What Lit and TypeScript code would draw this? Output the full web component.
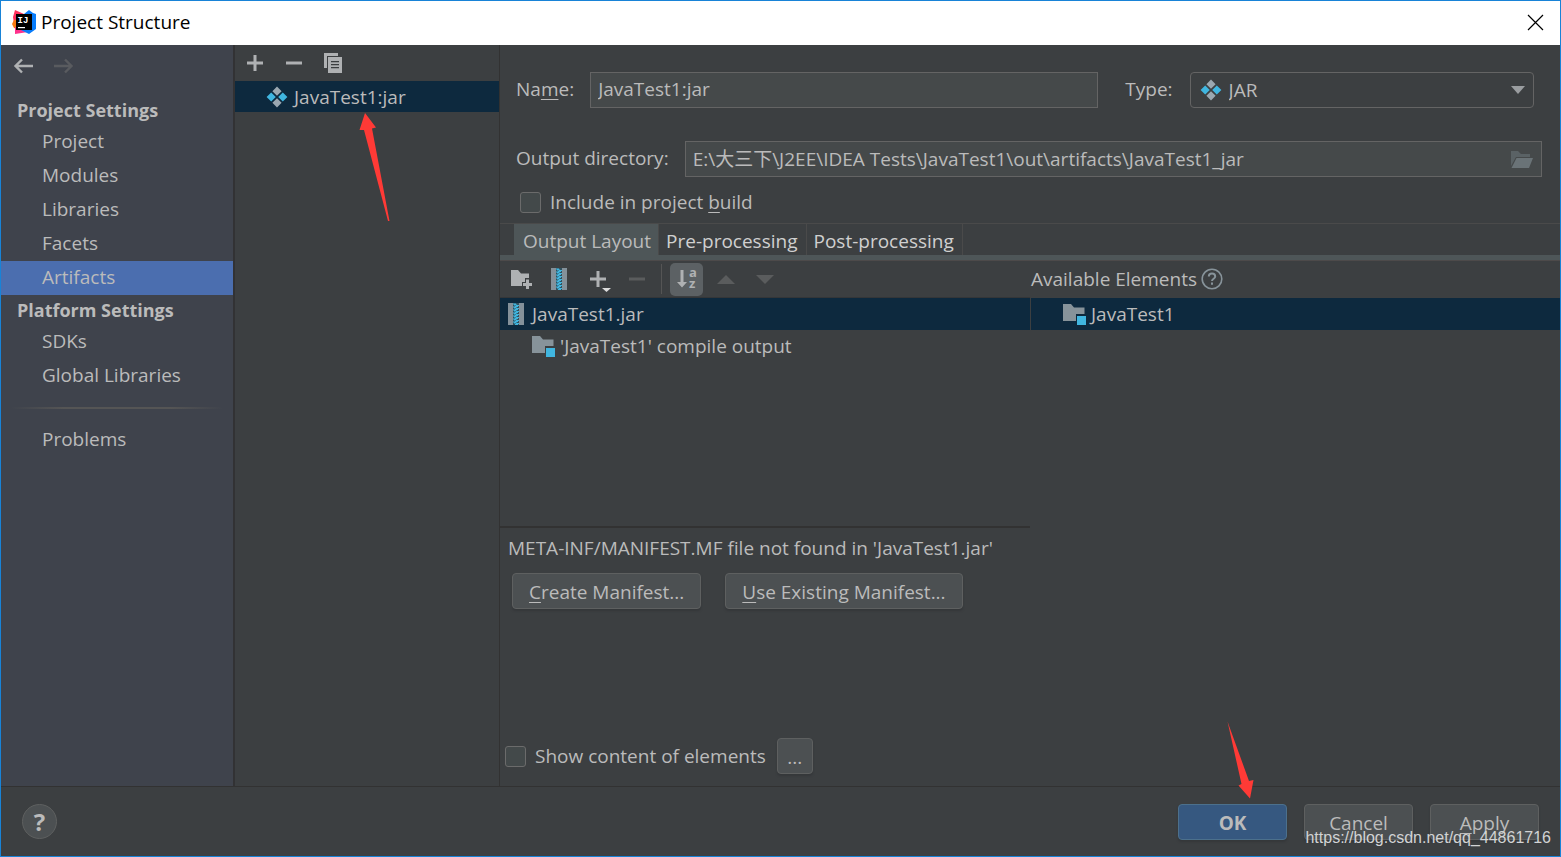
import { LitElement, html, css, svg } from "lit";
import { customElement, state } from "lit/decorators.js";
import { classMap } from "lit/directives/class-map.js";

const artifactIcon = html`<svg class="icon" width="22" height="22" viewBox="0 0 22 22" aria-hidden="true">
  <path fill="#9aa7b0" d="M11 .6l4.6 4.6L11 9.8 6.4 5.2zM11 12.2l4.6 4.6-4.6 4.6-4.6-4.6z" />
  <path fill="#40b6e0" d="M5.2 6.4L9.8 11l-4.6 4.6L.6 11zM16.8 6.4l4.6 4.6-4.6 4.6-4.6-4.6z" />
</svg>`;

const zipTeeth = Array.from(
  { length: 7 },
  (_, i) => svg`<path d="M5 ${i * 3 + 0.5}h3v1h1v1h-3v-1h-1zM8 ${i * 3 + 2}h3v1h-1v1h-3v-1h1z" />`,
);
const jarIcon = html`<svg class="icon" width="16" height="22" viewBox="0 0 16 22" aria-hidden="true">
  <path fill="#84919a" d="M0 0h5v22H0zM11 0h5v22h-5z" />
  <path fill="#31515f" d="M5 0h6v22H5z" />
  <g fill="#40b6e0">${zipTeeth}</g>
</svg>`;

const moduleIcon = html`<svg class="icon" width="24" height="22" viewBox="0 0 24 22" aria-hidden="true">
  <path fill="#87939a" d="M0 1h8l3 3.500h10.500V11H13v7H0z" />
  <path fill="#40b6e0" d="M14 13h9v9h-9z" />
</svg>`;

const logoIcon = html`<svg class="icon" width="24" height="24" viewBox="0 0 24 24" aria-hidden="true">
  <path fill="#fe315d" d="M3 0l9 4-4 16-6-6-1-7z" />
  <path fill="#f97a12" d="M0 14l2-4 3 0v9l-3-1z" />
  <path fill="#ff318c" d="M3 17l9 3 4 2-13 2z" />
  <path fill="#087cfa" d="M12 4l5-4 4 3 3 1v15l-7 5-8-4z" />
  <path fill="#000" d="M4 4h16v16H4z" />
  <path fill="#fff" d="M6 17h7v1.200H6z" />
  <text class="logo-text" x="5.500" y="13">IJ</text>
</svg>`;

@customElement("app-root")
export class AppRoot extends LitElement {
  @state() private page = "Artifacts";

  static styles = css`
    :host {
      display: flex;
      flex-direction: column;
      box-sizing: border-box;
      min-height: 100vh;
      position: relative;
      border: 1px solid #1883d7;
      background: #3c3f41;
      color: #bbbbbb;
      font: 19px/26px "Open Sans", "Noto Sans CJK SC", sans-serif;
    }
    * { box-sizing: border-box; }
    button, input, select { font: inherit; color: inherit; margin: 0; }
    ul { list-style: none; margin: 0; padding: 0; }
    u { text-underline-offset: 3px; text-decoration-thickness: 1px; }
    .icon { display: block; flex: none; }

    .titlebar {
      display: flex;
      align-items: center;
      gap: 5px;
      height: 44px;
      padding: 0 16px 2px 11px;
      background: #fff;
      color: #000;
    }
    .title { flex: 1; margin: 0; font-size: 19px; font-weight: 400; }
    .logo-text { font: bold 9px "Liberation Mono", monospace; fill: #fff; }

    .plain {
      display: flex;
      align-items: center;
      justify-content: center;
      padding: 0;
      border: 0;
      background: none;
    }

    .body { flex: 1; display: flex; }

    .sidebar { width: 234px; background: #3f434c; border-right: 2px solid #323234; }
    .history { display: flex; align-items: center; gap: 21px; height: 50px; padding: 0 12px; }
    .history .plain { height: 42px; align-self: flex-start; }
    .heading { margin: 0; padding-left: 16px; font-size: 18px; line-height: 30px; font-weight: 700; }
    .nav-item {
      display: block;
      height: 34px;
      padding-left: 41px;
      line-height: 32px;
      color: inherit;
      text-decoration: none;
    }
    .nav-item.on { background: #4b6eaf; }
    .rule {
      height: 2px;
      margin: 14px 10px;
      border: 0;
      background: linear-gradient(90deg, transparent, #555 25%, #555 75%, transparent);
    }

    .list { width: 265px; border-right: 1px solid #323232; }
    .list-tools { display: flex; align-items: center; gap: 20px; height: 36px; padding: 0 10px; }
    .list-item {
      position: relative;
      display: flex;
      align-items: center;
      gap: 6px;
      height: 31px;
      padding-left: 31px;
      background: #0d293e;
    }
    .arrow { position: absolute; pointer-events: none; z-index: 2; }
    .arrow-item { left: 124px; top: 31px; }
    .arrow-ok { left: 48px; bottom: 40px; }

    .details { flex: 1; display: flex; flex-direction: column; min-width: 0; }
    .form { display: flex; flex-direction: column; padding: 27px 18px 0 16px; }
    .row { display: flex; align-items: center; height: 36px; line-height: 24px; }
    .row > label { padding-bottom: 2px; }
    .row-name { padding-right: 8px; margin-bottom: 33px; }
    .row-check { height: 46px; padding: 6px 4px 0; }
    .name-label { margin-right: 16px; }
    .type-label { margin: 0 17px 0 27px; }
    .out-label { margin-right: 16px; }
    .field {
      width: 100%;
      height: 36px;
      padding: 0 7px 2px;
      border: 1px solid #646464;
      border-radius: 0;
      background: #45494a;
      outline: none;
    }
    .name-box { flex: 509; }
    .type-box { flex: 345; position: relative; }
    .out-box { flex: 1; position: relative; }
    .select {
      display: block;
      width: 100%;
      height: 36px;
      padding: 0 38px;
      appearance: none;
      border: 1px solid #646464;
      border-radius: 4px;
      background: #3c3f41;
    }
    .in-left, .in-right { position: absolute; top: 0; height: 36px; display: flex; align-items: center; pointer-events: none; }
    .in-left { left: 10px; }
    .in-right { right: 9px; }
    .check { display: flex; align-items: center; gap: 9px; }
    .box {
      appearance: none;
      width: 21px;
      height: 21px;
      border: 1px solid #6b6b6b;
      border-radius: 3px;
      background: #43494a;
    }

    .tabs {
      display: flex;
      height: 37px;
      padding-left: 14px;
      border-top: 1px solid #4a4a4a;
      border-bottom: 5px solid #4e5658;
    }
    .tab {
      padding: 2px 8px 0 7px;
      border: 0;
      border-right: 1px solid #4a4a4a;
      background: none;
      white-space: nowrap;
      color: #d0d0d0;
      line-height: 28px;
    }
    .tab.on { padding: 2px 7px 0 9px; background: #4e5658; color: #bbbbbb; }

    .panes {
      flex: 1;
      display: grid;
      grid-template-columns: 1fr 1fr;
      grid-template-rows: auto 1fr;
      border-top: 1px solid #4d4a4a;
    }
    .pane { display: flex; flex-direction: column; min-width: 0; }
    .tools { display: flex; align-items: center; height: 37px; padding-left: 10px; border-bottom: 1px solid #343638; }
    .tools-right { gap: 4px; padding: 0 0 1px 1px; border-bottom-color: transparent; }
    .tool { width: 39px; height: 36px; justify-content: flex-start; }
    .archive { padding-left: 2px; }
    .toggle { width: 33px; height: 33px; margin: 0 14px 0 8px; border-radius: 5px; background: #5c6164; }
    .bar { width: 1px; height: 30px; background: #555; margin-left: -5px; }
    .tool-text { font: bold 13px "Open Sans", sans-serif; fill: #afb1b3; }
    .tree { height: 230px; border-bottom: 2px solid #323232; }
    .node { display: flex; align-items: center; gap: 8px; height: 32px; padding-left: 8px; }
    .node.on { background: #0d293e; }
    .node.child { gap: 4px; padding-left: 32px; }
    .node.right { gap: 4px; padding-left: 32px; border-left: 1px solid #3c3f41; }
    .notice { margin: 7px 8px 12px; }
    .actions { display: flex; gap: 24px; padding-left: 12px; }
    .btn {
      height: 36px;
      padding: 2px 16px 0;
      border: 1px solid #5e6060;
      border-radius: 4px;
      background: #4c5052;
      box-shadow: 0 2px 2px #35383a;
      line-height: 32px;
      white-space: nowrap;
    }
    .pane-foot { display: flex; align-items: center; gap: 11px; margin-top: auto; padding: 0 0 12px 5px; }
    .more { width: 36px; padding: 2px 0 0; }

    .footer {
      position: relative;
      display: flex;
      align-items: center;
      gap: 17px;
      height: 70px;
      padding: 0 21px;
      border-top: 1px solid #323232;
    }
    .help {
      width: 35px;
      height: 35px;
      margin-right: auto;
      border: 1px solid #5e6060;
      border-radius: 50%;
      background: #4c5052;
      font-size: 24px;
      font-weight: 700;
    }
    .dialog-btn { width: 109px; padding: 2px 0 0; }
    .ok { position: relative; font-weight: 700; background: #365880; border-color: #4c708c; }
    .watermark {
      position: absolute;
      right: 9px;
      bottom: 9px;
      font: 16px/18px "Liberation Sans", Arial, sans-serif;
      color: #d2d3d4;
    }
  `;

  private navItem(name: string) {
    return html`<li><a href="#" class=${classMap({ "nav-item": true, on: this.page === name })}
      @click=${(e: Event) => { e.preventDefault(); this.page = name; }}>${name}</a></li>`;
  }

  render() {
    return html`
      <header class="titlebar">
        ${logoIcon}
        <h1 class="title">Project Structure</h1>
        <button class="plain" aria-label="Close">
          <svg width="17" height="17" viewBox="0 0 17 17" stroke="#000" stroke-width="1.200"><path d="M1 1l15 15M16 1L1 16" /></svg>
        </button>
      </header>
      <div class="body">
        <nav class="sidebar">
          <div class="history">
            <button class="plain" aria-label="Back">
              <svg width="20" height="16" viewBox="0 0 20 16" fill="none" stroke="#afb1b3" stroke-width="2.400"><path d="M20 8H2.500M9 1.500L2.500 8 9 14.500" /></svg>
            </button>
            <button class="plain" aria-label="Forward" disabled>
              <svg width="20" height="16" viewBox="0 0 20 16" fill="none" stroke="#595b5f" stroke-width="2.400"><path d="M0 8h17.500M11 1.500L17.500 8 11 14.500" /></svg>
            </button>
          </div>
          <h2 class="heading">Project Settings</h2>
          <ul>${["Project", "Modules", "Libraries", "Facets", "Artifacts"].map((n) => this.navItem(n))}</ul>
          <h2 class="heading">Platform Settings</h2>
          <ul>${["SDKs", "Global Libraries"].map((n) => this.navItem(n))}</ul>
          <hr class="rule" />
          <ul>${this.navItem("Problems")}</ul>
        </nav>

        <section class="list">
          <div class="list-tools">
            <button class="plain" aria-label="Add"><svg width="20" height="20" viewBox="0 0 20 20"><path fill="#afb1b3" d="M8.500 2h3v6.500H18v3h-6.500V18h-3v-6.500H2v-3h6.500z" /></svg></button>
            <button class="plain" aria-label="Remove"><svg width="18" height="20" viewBox="0 0 18 20"><path fill="#afb1b3" d="M1 8.500h16v3H1z" /></svg></button>
            <button class="plain" aria-label="Copy"><svg width="20" height="20" viewBox="0 0 20 20"><path fill="#afb1b3" d="M1 0h14v3H4v12H1z" /><path fill="#afb1b3" fill-rule="evenodd" d="M5 4h14v16H5zM8 8v1.300h8V8zM8 11v1.300h8V11zM8 14v1.300h8V14z" /></svg></button>
          </div>
          <div class="list-item">
            ${artifactIcon}<span>JavaTest1:jar</span>
            <svg class="arrow arrow-item" width="32" height="112" viewBox="0 0 32 112" aria-hidden="true"><path fill="#ff3a36" d="M6 1L17 15.500l-4 1L30.500 109 29 109 5 18 .5 18z" /></svg>
          </div>
        </section>

        <main class="details">
          <div class="form">
            <div class="row row-name">
              <label class="name-label" for="name">Na<u>m</u>e:</label>
              <div class="name-box"><input class="field" id="name" value="JavaTest1:jar" /></div>
              <label class="type-label" for="type">Type:</label>
              <div class="type-box">
                <select class="select" id="type"><option>JAR</option></select>
                <span class="in-left">${artifactIcon}</span>
                <span class="in-right"><svg width="14" height="8" viewBox="0 0 14 8"><path fill="#9a9da0" d="M0 0h14L7 8z" /></svg></span>
              </div>
            </div>
            <div class="row">
              <label class="out-label" for="out">Output directory:</label>
              <div class="out-box">
                <input class="field" id="out" value="E:\\大三下\\J2EE\\IDEA Tests\\JavaTest1\\out\\artifacts\\JavaTest1_jar" />
                <span class="in-right"><svg width="22" height="17" viewBox="0 0 22 17"><path fill="#5a6265" d="M0 0h7l3 3h9v3H5L0 15z" /><path fill="#6a7377" d="M5.500 7H22l-4 10H.5z" /></svg></span>
              </div>
            </div>
            <div class="row row-check">
              <label class="check"><input class="box" type="checkbox" /><span>Include in project <u>b</u>uild</span></label>
            </div>
          </div>
          <div class="tabs" role="tablist">
            <button class="tab on" role="tab" aria-selected="true">Output Layout</button>
            <button class="tab" role="tab" aria-selected="false">Pre-processing</button>
            <button class="tab" role="tab" aria-selected="false">Post-processing</button>
          </div>
          <div class="panes">
            <div class="tools">
              <button class="plain tool" aria-label="Create directory"><svg width="22" height="20" viewBox="0 0 22 20"><path fill="#afb1b3" d="M1 1h7l3 3.500h8V9h-4v4h-3v4H1z" /><path fill="#afb1b3" d="M16 10.500h3V14h3v3h-3v3h-3v-3h-3v-3h3z" /></svg></button>
              <button class="plain tool archive" aria-label="Create archive">${jarIcon}</button>
              <button class="plain tool" aria-label="Add copy of"><svg width="24" height="26" viewBox="0 0 24 26"><path fill="#afb1b3" d="M8.500 5h3v6.500H18v3h-6.500V21h-3v-6.500H2v-3h6.500z" /><path fill="#dcdcdc" d="M14 22h9l-4.500 4z" /></svg></button>
              <button class="plain tool" aria-label="Remove" disabled><svg width="20" height="20" viewBox="0 0 20 20"><path fill="#5a5c5d" d="M2 8.500h16v3H2z" /></svg></button>
              <span class="bar"></span>
              <button class="plain toggle" aria-label="Sort by name and type" aria-pressed="true">
                <svg width="22" height="32" viewBox="0 0 22 32"><path fill="#afb1b3" d="M4.500 7h3v12H11l-5 5.500L1 19h3.500z" /><text class="tool-text" x="13" y="14">a</text><text class="tool-text" x="13" y="25">z</text></svg>
              </button>
              <button class="plain tool" aria-label="Move up" disabled><svg width="18" height="9" viewBox="0 0 18 9"><path fill="#5a5c5d" d="M0 9h18L9 0z" /></svg></button>
              <button class="plain tool" aria-label="Move down" disabled><svg width="18" height="9" viewBox="0 0 18 9"><path fill="#5a5c5d" d="M0 0h18L9 9z" /></svg></button>
            </div>
            <div class="tools tools-right">
              <span>Available Elements</span>
              <svg width="22" height="22" viewBox="0 0 22 22" fill="none" stroke="#87939a" stroke-width="1.600" role="img" aria-label="Help"><circle cx="11" cy="11" r="9.800" /><path stroke-width="2" d="M7.800 8.500c0-4 6.400-4 6.400 0 0 2.200-3.200 2.300-3.200 4.500M11 14.600v2.200" /></svg>
            </div>
            <div class="pane">
              <div class="tree">
                <div class="node on">${jarIcon}<span>JavaTest1.jar</span></div>
                <div class="node child">${moduleIcon}<span>'JavaTest1' compile output</span></div>
              </div>
              <p class="notice">META-INF/MANIFEST.MF file not found in 'JavaTest1.jar'</p>
              <div class="actions">
                <button class="btn"><u>C</u>reate Manifest...</button>
                <button class="btn"><u>U</u>se Existing Manifest...</button>
              </div>
              <div class="pane-foot">
                <label class="check"><input class="box" type="checkbox" /><span>Show content of elements</span></label>
                <button class="btn more">...</button>
              </div>
            </div>
            <div class="pane">
              <div class="node on right">${moduleIcon}<span>JavaTest1</span></div>
            </div>
          </div>
        </main>
      </div>
      <footer class="footer">
        <button class="plain help" aria-label="Help">?</button>
        <button class="btn dialog-btn ok">OK
          <svg class="arrow arrow-ok" width="28" height="78" viewBox="0 0 28 78" aria-hidden="true"><path fill="#ff3a36" d="M.5.500L22 60l4.500-1L23 77.500 11.500 64.500l3-1.500z" /></svg>
        </button>
        <button class="btn dialog-btn">Cancel</button>
        <button class="btn dialog-btn"><u>A</u>pply</button>
        <span class="watermark">https://blog.csdn.net/qq_44861716</span>
      </footer>
    `;
  }
}
